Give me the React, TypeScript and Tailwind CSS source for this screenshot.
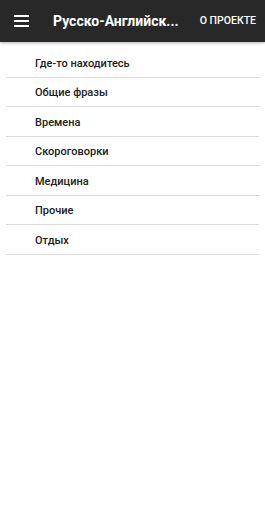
const items = [
  'Где-то находитесь',
  'Общие фразы',
  'Времена',
  'Скороговорки',
  'Медицина',
  'Прочие',
  'Отдых',
]

export default function App() {
  return (
    <div className="w-[265px] h-[512px] bg-white font-['Roboto',sans-serif] overflow-hidden">
      <header className="h-[42px] bg-[#282828] flex items-center shadow-[0_1px_3px_rgba(0,0,0,0.3)] relative z-10">
        <div className="w-[53px] flex items-center justify-center pr-[12px] pl-[1px]">
          <svg width="15" height="12" viewBox="0 0 15 12">
            <rect x="0" y="0" width="15" height="2" fill="#fff" />
            <rect x="0" y="5" width="15" height="2" fill="#fff" />
            <rect x="0" y="10" width="15" height="2" fill="#fff" />
          </svg>
        </div>
        <h1 className="flex-1 whitespace-nowrap text-white text-[14px] font-bold leading-none">
          Русско-Английск...
        </h1>
        <span className="pr-[9px] text-white text-[10.5px] font-medium leading-none">О ПРОЕКТЕ</span>
      </header>
      <ul className="pt-[6px] px-[6px]">
        {items.map(t => (
          <li
            key={t}
            className="h-[29.5px] border-b border-[#dcdcdc] flex items-center pt-[3px] pl-[29px] text-[11px] font-medium text-[#212121]"
          >
            {t}
          </li>
        ))}
      </ul>
    </div>
  )
}
